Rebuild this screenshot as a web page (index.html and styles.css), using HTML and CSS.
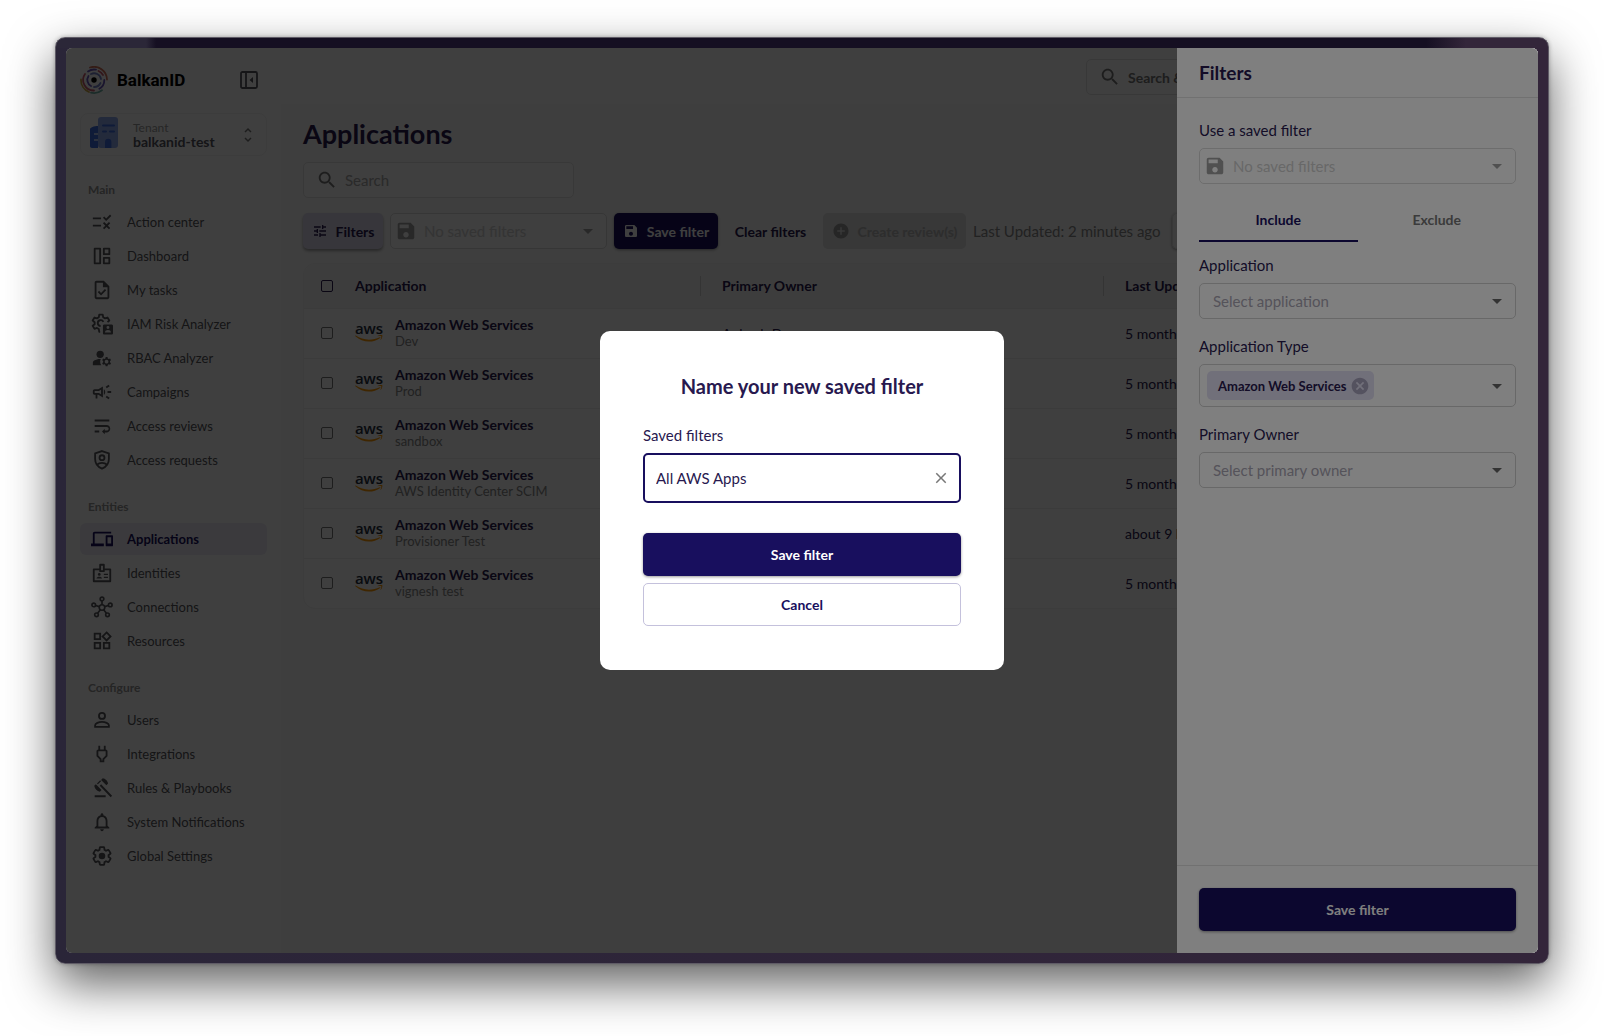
FILE: index.html
```html
<!DOCTYPE html>
<html lang="en">
<head>
    <meta charset="UTF-8">
    <meta name="viewport" content="width=device-width, initial-scale=1.0">
    <title>Applications - BalkanID</title>
    <link rel="stylesheet" href="styles.css">
</head>
<body>
    <!-- icon sprite -->
    <svg class="sprite" aria-hidden="true">
        <symbol id="i-rule" viewBox="0 0 24 24"><path d="M16.54 11L13 7.46l1.41-1.41 2.12 2.12 4.24-4.24 1.41 1.41L16.54 11zM11 7H2v2h9V7zm10 6.41L19.59 12 17 14.59 14.41 12 13 13.41 15.59 16 13 18.59 14.41 20 17 17.41 19.59 20 21 18.59 18.41 16 21 13.41zM11 15H2v2h9v-2z"/></symbol>
        <symbol id="i-dashboard" viewBox="0 0 24 24"><g fill="none" stroke="currentColor" stroke-width="2" stroke-linejoin="round"><path d="M4 4h6v16H4zM14 4h6v6h-6zM14 14h6v6h-6z"/></g></symbol>
        <symbol id="i-task" viewBox="0 0 24 24"><path d="M14 2H6c-1.1 0-2 .9-2 2v16c0 1.1.89 2 1.99 2H18c1.1 0 2-.9 2-2V8l-6-6zm4 18H6V4h7v5h5v11zm-9.18-7.05L7.4 14.36 10.94 18l5.66-5.66-1.41-1.41-4.24 4.24-2.13-2.22z"/></symbol>
        <symbol id="i-iam" viewBox="0 0 24 24"><g fill="none" stroke="currentColor" stroke-width="2" stroke-linejoin="round"><path d="M10 20.500H9l-.5-3-2-1.200-2.700 1-2-3.300L4 12.200V10L1.800 8.200l2-3.300 2.700 1 2-1.200.5-3h3.800l.5 3 2 1.200 2.700-1 2 3.300-2 1.800"/><path d="M10.500 14.200a3.200 3.200 0 1 1 3-4.500"/></g><path fill-rule="evenodd" d="M14.500 12.500h8c.8 0 1.500.7 1.500 1.500v8c0 .8-.7 1.500-1.500 1.500h-8c-.8 0-1.500-.7-1.500-1.500v-8c0-.8.700-1.500 1.500-1.500zm4 1.800a1.600 1.600 0 1 0 0 3.200 1.600 1.600 0 0 0 0-3.200zm-3.300 7h6.600c0-2-1.500-2.800-3.300-2.800s-3.300.8-3.300 2.800z"/></symbol>
        <symbol id="i-rbac" viewBox="0 0 24 24"><circle cx="10" cy="8" r="4"/><path d="M10.670 13.020C10.450 13.010 10.230 13 10 13c-2.420 0-4.680.67-6.610 1.820C2.510 15.340 2 16.320 2 17.350V20h9.260A6.960 6.960 0 0 1 10 16c0-1.070.25-2.070.67-2.980zM20.750 16c0-.22-.03-.42-.06-.63l1.140-1.010-1-1.730-1.450.49c-.32-.27-.68-.48-1.080-.63L18 11h-2l-.3 1.490c-.4.15-.76.36-1.080.63l-1.450-.49-1 1.730 1.140 1.010c-.03.21-.06.41-.06.63s.03.42.06.63l-1.140 1.010 1 1.730 1.450-.49c.32.27.68.48 1.080.63L16 21h2l.3-1.490c.4-.15.76-.36 1.080-.63l1.450.49 1-1.730-1.140-1.010c.03-.21.06-.41.06-.63zM17 18c-1.100 0-2-.9-2-2s.9-2 2-2 2 .9 2 2-.9 2-2 2z"/></symbol>
        <symbol id="i-campaign" viewBox="0 0 24 24"><path d="M18 11v2h4v-2h-4zM16 17.610c.96.71 2.210 1.650 3.200 2.390.4-.53.8-1.070 1.200-1.600-.99-.74-2.240-1.680-3.200-2.400-.4.54-.8 1.080-1.200 1.610zM20.400 5.600c-.4-.53-.8-1.070-1.200-1.600-.99.74-2.240 1.680-3.200 2.400.4.53.8 1.070 1.200 1.600.96-.72 2.210-1.650 3.200-2.400zM4 9c-1.100 0-2 .9-2 2v2c0 1.100.9 2 2 2h1v4h2v-4h1l5 3V6L8 9H4zm5.030 1.710L11 9.530v4.940l-1.970-1.180-.48-.29H4v-2h4.550l.48-.29zM15.500 12c0-1.330-.58-2.530-1.500-3.350v6.690c.92-.81 1.500-2.010 1.500-3.340z"/></symbol>
        <symbol id="i-wrap" viewBox="0 0 24 24"><path d="M4 19h5v-2H4v2zM20 5H4v2h16V5zm-3 6H4v2h13.250c1.100 0 2 .9 2 2s-.9 2-2 2H15v-2l-3 3 3 3v-2h2c2.210 0 4-1.790 4-4s-1.790-4-4-4z"/></symbol>
        <symbol id="i-shield" viewBox="0 0 24 24"><g fill="none" stroke="currentColor" stroke-width="2"><path d="M12 2.200l7.500 2.600V11c0 5-3.200 8.800-7.500 10.500C7.700 19.800 4.500 16 4.500 11V4.800z"/><circle cx="12" cy="9.500" r="2.700"/><path d="M6.500 17c3-2.600 8-2.600 11 0"/></g></symbol>
        <symbol id="i-devices" viewBox="0 0 24 24"><path d="M4 6h18V4H4c-1.100 0-2 .9-2 2v11H0v3h14v-3H4V6zm19 2h-6c-.55 0-1 .45-1 1v10c0 .55.45 1 1 1h6c.55 0 1-.45 1-1V9c0-.55-.45-1-1-1zm-1 9h-4v-7h4v7z"/></symbol>
        <symbol id="i-badge" viewBox="0 0 24 24"><g fill="none" stroke="currentColor" stroke-width="2" stroke-linejoin="round"><path d="M10 8H3v13h18V8h-7"/><path d="M10 3h4v7h-4z"/></g><circle cx="9" cy="13.500" r="1.500"/><path d="M6 18c0-1.500 1.500-2 3-2s3 .5 3 2zM14 12.800h4.500v1.500H14zM14 16h4.500v1.500H14z"/></symbol>
        <symbol id="i-hub" viewBox="0 0 24 24"><g fill="none" stroke="currentColor" stroke-width="1.800"><circle cx="12" cy="12.500" r="3"/><circle cx="12" cy="3.200" r="2"/><circle cx="3" cy="9.700" r="2"/><circle cx="21" cy="9.700" r="2"/><circle cx="6" cy="20.500" r="2"/><circle cx="18" cy="20.500" r="2"/><path d="M12 5.200v4.300M5 10.300l4.100 1.300M19 10.300l-4.100 1.300M7.200 18.900l3-4M16.800 18.900l-3-4"/></g></symbol>
        <symbol id="i-widgets" viewBox="0 0 24 24"><g fill="none" stroke="currentColor" stroke-width="2"><path d="M4 4h6v6H4zM4 14h6v6H4zM14 14h6v6h-6zM17 2.700l4.300 4.300-4.300 4.300L12.700 7z"/></g></symbol>
        <symbol id="i-user" viewBox="0 0 24 24"><g fill="none" stroke="currentColor" stroke-width="2"><circle cx="12" cy="7.500" r="3.300"/><path d="M4.500 19.500v-1.800c0-2 4-3.700 7.500-3.700s7.500 1.700 7.500 3.700v1.800z"/></g></symbol>
        <symbol id="i-plug" viewBox="0 0 24 24"><path d="M16 9v4.660l-3.500 3.510V19h-1v-1.830L8 13.650V9h8m0-6h-2v4h-4V3H8v4h-.01C6.900 6.990 6 7.890 6 8.980v5.520L9.500 18v3h5v-3l3.500-3.510V9c0-1.100-.9-2-2-2V3z"/></symbol>
        <symbol id="i-gavel" viewBox="0 0 24 24"><path d="M4 20h12v2H4zM9.500 9.500L11 8l12 12.500-1.500 1.500zM11 3.200l1.800-1.800c2.800.3 5.500 3 5.800 5.800l-1.800 1.800zM3.500 9.500l1.800-1.500 6.200 6.200-1.800 1.800c-3-.4-5.600-3-6.200-6.500zM6.500 7l3.500-3.500 1 1L7.500 8z"/></symbol>
        <symbol id="i-bell" viewBox="0 0 24 24"><path d="M12 22c1.100 0 2-.9 2-2h-4c0 1.100.9 2 2 2zm6-6v-5c0-3.070-1.630-5.640-4.500-6.320V4c0-.83-.67-1.500-1.500-1.500s-1.500.67-1.500 1.500v.68C7.640 5.360 6 7.920 6 11v5l-2 2v1h16v-1l-2-2zm-2 1H8v-6c0-2.480 1.510-4.500 4-4.500s4 2.020 4 4.500v6z"/></symbol>
        <symbol id="i-gear" viewBox="0 0 24 24"><path fill="none" stroke="currentColor" stroke-width="2" d="M19.140 12.940c.04-.3.06-.61.06-.94 0-.32-.02-.64-.07-.94l2.030-1.580c.18-.14.23-.41.12-.61l-1.920-3.320c-.12-.22-.37-.29-.59-.22l-2.390.96c-.5-.38-1.030-.7-1.620-.94l-.36-2.540c-.04-.24-.24-.41-.48-.41h-3.840c-.24 0-.43.17-.47.41l-.36 2.540c-.59.24-1.130.57-1.620.94l-2.390-.96c-.22-.08-.47 0-.59.22L2.740 8.870c-.12.21-.08.47.12.61l2.030 1.580c-.05.3-.09.63-.09.94s.02.64.07.94l-2.030 1.580c-.18.14-.23.41-.12.61l1.920 3.320c.12.22.37.29.59.22l2.390-.96c.5.38 1.030.7 1.620.94l.36 2.540c.05.24.24.41.48.41h3.840c.24 0 .44-.17.47-.41l.36-2.540c.59-.24 1.130-.56 1.620-.94l2.390.96c.22.08.47 0 .59-.22l1.920-3.320c.12-.22.07-.47-.12-.61l-2.010-1.580z"/><circle cx="12" cy="12" r="3.600"/></symbol>
        <symbol id="i-search" viewBox="0 0 24 24"><path d="M15.500 14h-.79l-.28-.27C15.410 12.590 16 11.110 16 9.500 16 5.910 13.090 3 9.500 3S3 5.910 3 9.500 5.910 16 9.500 16c1.610 0 3.090-.59 4.230-1.570l.27.28v.79l5 4.990L20.490 19l-4.990-5zm-6 0C7.010 14 5 11.990 5 9.500S7.010 5 9.500 5 14 7.010 14 9.500 11.990 14 9.500 14z"/></symbol>
        <symbol id="i-save" viewBox="0 0 24 24"><path d="M17 3H5c-1.110 0-2 .9-2 2v14c0 1.100.89 2 2 2h14c1.100 0 2-.9 2-2V7l-4-4zm-5 16c-1.660 0-3-1.340-3-3s1.340-3 3-3 3 1.340 3 3-1.340 3-3 3zm3-10H5V5h10v4z"/></symbol>
        <symbol id="i-tune" viewBox="0 0 24 24"><path d="M3 17v2h6v-2H3zM3 5v2h10V5H3zm10 16v-2h8v-2h-8v-2h-2v6h2zM7 9v2H3v2h4v2h2V9H7zm14 4v-2H11v2h10zm-6-4h2V7h4V5h-4V3h-2v6z"/></symbol>
        <symbol id="i-add" viewBox="0 0 24 24"><path d="M12 2C6.480 2 2 6.480 2 12s4.480 10 10 10 10-4.480 10-10S17.520 2 12 2zm5 11h-4v4h-2v-4H7v-2h4V7h2v4h4v2z"/></symbol>
        <symbol id="i-remove" viewBox="0 0 24 24"><path d="M12 2C6.470 2 2 6.470 2 12s4.470 10 10 10 10-4.470 10-10S17.530 2 12 2zm5 13.590L15.590 17 12 13.410 8.410 17 7 15.590 10.590 12 7 8.410 8.410 7 12 10.590 15.590 7 17 8.410 13.410 12 17 15.590z"/></symbol>
        <symbol id="i-close" viewBox="0 0 24 24"><path d="M19 6.410L17.590 5 12 10.590 6.410 5 5 6.410 10.590 12 5 17.590 6.410 19 12 13.410 17.590 19 19 17.590 13.410 12z"/></symbol>
        <symbol id="i-drop" viewBox="0 0 24 24"><path d="M7 10l5 5 5-5z"/></symbol>
        <symbol id="i-aws" viewBox="0 0 28 20"><text class="aws-word" x="14" y="11" text-anchor="middle">aws</text><path fill="#ff9900" d="M.8 12.600c7 5 16.500 5.300 24 1.600.5-.2.900.3.400.7-7.200 5.300-18 4.800-24.800-1.700-.4-.4 0-.9.4-.6z"/><path fill="#ff9900" d="M26.200 13.200c-.6-.5-2.300-.3-3.400 0-.3 0-.3-.3 0-.5 1.600-1 4.200-.9 4.500-.4.300.6-.2 3.300-1.500 4.500-.3.200-.5 0-.3-.3.400-1 1.100-2.700.7-3.300z"/></symbol>
    </svg>

    <div class="window">
        <div class="app">
            <aside class="sidebar">
                <div class="brand">
                    <svg class="brand-logo" viewBox="0 0 28 28" fill="none" stroke-width="1.800" stroke-linecap="round">
                        <path stroke="#d0705a" d="M10 1.500A13 13 0 0 1 27 13.500"/>
                        <path stroke="#c9a545" d="M1 13.500a13 13 0 0 0 8 12.500"/>
                        <path stroke="#6fb0a4" d="M11 26.700a13 13 0 0 0 11-2.400"/>
                        <path stroke="#c8586e" d="M5 8a10.500 10.500 0 0 0 9 16.500M18.500 5a10.500 10.500 0 0 1 4.500 4"/>
                        <path stroke="#6a54b8" d="M8 5.500a10.500 10.500 0 0 1 8-1.800M24.300 14a10 10 0 0 1-5 8.800M8.500 10a7 7 0 0 0 2.500 10"/>
                        <path stroke="#7482c8" d="M11 8a7 7 0 0 1 10 5M20.500 17a7 7 0 0 1-6.500 4"/>
                        <circle cx="14" cy="14" r="2.700" fill="#000"/>
                    </svg>
                    <span class="brand-name">BalkanID</span>
                    <button class="icon-button" type="button" aria-label="Collapse sidebar">
                        <svg viewBox="0 0 18 18" width="18" height="18" fill="none" stroke="currentColor" stroke-width="1.800"><rect x="1" y="1" width="16" height="16" rx="1.500"/><path d="M6 1v16"/><path d="M13 6v6L9.500 9z" fill="currentColor" stroke="none"/></svg>
                    </button>
                </div>

                <button class="tenant" type="button">
                    <svg class="tenant-icon" viewBox="0 0 30 32"><path fill="#3d6ee0" d="M1 13c0-1.500 4-3 8-3v22H3c-1.200 0-2-.8-2-2z"/><rect x="9" y="1" width="20" height="31" rx="3" fill="#8fa9ee"/><path stroke="#3d6ee0" stroke-width="2" stroke-linecap="round" d="M14 9.500h11M14 15.500h3M21 15.500h4"/><path fill="#3d6ee0" d="M16 32v-6a3.200 3.200 0 0 1 6.400 0v6z"/><path stroke="#d9e2fb" stroke-width="1.600" d="M5 18h4M5 24h4"/></svg>
                    <span class="tenant-text">
                        <span class="tenant-label">Tenant</span>
                        <span class="tenant-name">balkanid-test</span>
                    </span>
                    <svg class="tenant-arrows" viewBox="0 0 10 16" fill="none" stroke="currentColor" stroke-width="1.500"><path d="M2 5l3-3 3 3M2 11l3 3 3-3"/></svg>
                </button>

                <nav>
                    <h2 class="nav-title">Main</h2>
                    <ul class="nav-list">
                        <li><a class="nav-link" href="#"><svg><use href="#i-rule"/></svg>Action center</a></li>
                        <li><a class="nav-link" href="#"><svg><use href="#i-dashboard"/></svg>Dashboard</a></li>
                        <li><a class="nav-link" href="#"><svg><use href="#i-task"/></svg>My tasks</a></li>
                        <li><a class="nav-link" href="#"><svg><use href="#i-iam"/></svg>IAM Risk Analyzer</a></li>
                        <li><a class="nav-link" href="#"><svg><use href="#i-rbac"/></svg>RBAC Analyzer</a></li>
                        <li><a class="nav-link" href="#"><svg><use href="#i-campaign"/></svg>Campaigns</a></li>
                        <li><a class="nav-link" href="#"><svg><use href="#i-wrap"/></svg>Access reviews</a></li>
                        <li><a class="nav-link" href="#"><svg><use href="#i-shield"/></svg>Access requests</a></li>
                    </ul>
                    <h2 class="nav-title">Entities</h2>
                    <ul class="nav-list">
                        <li><a class="nav-link active" href="#"><svg><use href="#i-devices"/></svg>Applications</a></li>
                        <li><a class="nav-link" href="#"><svg><use href="#i-badge"/></svg>Identities</a></li>
                        <li><a class="nav-link" href="#"><svg><use href="#i-hub"/></svg>Connections</a></li>
                        <li><a class="nav-link" href="#"><svg><use href="#i-widgets"/></svg>Resources</a></li>
                    </ul>
                    <h2 class="nav-title">Configure</h2>
                    <ul class="nav-list">
                        <li><a class="nav-link" href="#"><svg><use href="#i-user"/></svg>Users</a></li>
                        <li><a class="nav-link" href="#"><svg><use href="#i-plug"/></svg>Integrations</a></li>
                        <li><a class="nav-link" href="#"><svg><use href="#i-gavel"/></svg>Rules &amp; Playbooks</a></li>
                        <li><a class="nav-link" href="#"><svg><use href="#i-bell"/></svg>System Notifications</a></li>
                        <li><a class="nav-link" href="#"><svg><use href="#i-gear"/></svg>Global Settings</a></li>
                    </ul>
                </nav>
            </aside>

            <main class="main">
                <header class="topbar">
                    <button class="global-search" type="button"><svg class="icon-lg"><use href="#i-search"/></svg>Search &amp; Ask</button>
                </header>
                <div class="content">
                    <h1>Applications</h1>
                    <label class="search-box">
                        <svg class="icon-lg"><use href="#i-search"/></svg>
                        <input type="search" placeholder="Search" aria-label="Search applications">
                    </label>

                    <div class="toolbar">
                        <button class="btn btn-soft" type="button"><svg class="icon-sm"><use href="#i-tune"/></svg>Filters</button>
                        <div class="select-box saved-select">
                            <svg class="icon-lg"><use href="#i-save"/></svg>
                            <select disabled aria-label="Saved filters">
                                <option>No saved filters</option>
                            </select>
                            <svg class="caret"><use href="#i-drop"/></svg>
                        </div>
                        <button class="btn btn-primary" type="button"><svg class="icon-sm"><use href="#i-save"/></svg>Save filter</button>
                        <button class="btn btn-text" type="button">Clear filters</button>
                        <button class="btn btn-disabled" type="button" disabled><svg class="icon-md"><use href="#i-add"/></svg>Create review(s)</button>
                        <span class="updated">Last Updated: 2 minutes ago</span>
                        <button class="btn btn-plain" type="button">Refresh</button>
                    </div>

                    <div class="table-card">
                        <table>
                            <thead>
                                <tr>
                                    <th class="col-check"><input type="checkbox" aria-label="Select all"></th>
                                    <th class="col-app">Application</th>
                                    <th class="col-owner">Primary Owner</th>
                                    <th>Last Updated</th>
                                </tr>
                            </thead>
                            <tbody>
                                <tr>
                                    <td><input type="checkbox" aria-label="Select Dev"></td>
                                    <td><div class="app-cell"><svg><use href="#i-aws"/></svg><div><strong>Amazon Web Services</strong><span>Dev</span></div></div></td>
                                    <td>Ankush Deep</td>
                                    <td>5 months ago</td>
                                </tr>
                                <tr>
                                    <td><input type="checkbox" aria-label="Select Prod"></td>
                                    <td><div class="app-cell"><svg><use href="#i-aws"/></svg><div><strong>Amazon Web Services</strong><span>Prod</span></div></div></td>
                                    <td></td>
                                    <td>5 months ago</td>
                                </tr>
                                <tr>
                                    <td><input type="checkbox" aria-label="Select sandbox"></td>
                                    <td><div class="app-cell"><svg><use href="#i-aws"/></svg><div><strong>Amazon Web Services</strong><span>sandbox</span></div></div></td>
                                    <td></td>
                                    <td>5 months ago</td>
                                </tr>
                                <tr>
                                    <td><input type="checkbox" aria-label="Select AWS Identity Center SCIM"></td>
                                    <td><div class="app-cell"><svg><use href="#i-aws"/></svg><div><strong>Amazon Web Services</strong><span>AWS Identity Center SCIM</span></div></div></td>
                                    <td></td>
                                    <td>5 months ago</td>
                                </tr>
                                <tr>
                                    <td><input type="checkbox" aria-label="Select Provisioner Test"></td>
                                    <td><div class="app-cell"><svg><use href="#i-aws"/></svg><div><strong>Amazon Web Services</strong><span>Provisioner Test</span></div></div></td>
                                    <td></td>
                                    <td>about 9 hours ago</td>
                                </tr>
                                <tr>
                                    <td><input type="checkbox" aria-label="Select vignesh test"></td>
                                    <td><div class="app-cell"><svg><use href="#i-aws"/></svg><div><strong>Amazon Web Services</strong><span>vignesh test</span></div></div></td>
                                    <td></td>
                                    <td>5 months ago</td>
                                </tr>
                            </tbody>
                        </table>
                    </div>
                </div>
            </main>

            <div class="backdrop"></div>

            <section class="drawer" aria-label="Filters">
                <h2 class="drawer-title">Filters</h2>
                <div class="drawer-body">
                    <label class="field-label" for="use-saved">Use a saved filter</label>
                    <div class="select-box">
                        <svg class="icon-lg"><use href="#i-save"/></svg>
                        <select id="use-saved" disabled>
                            <option>No saved filters</option>
                        </select>
                        <svg class="caret"><use href="#i-drop"/></svg>
                    </div>
                    <div class="tabs" role="tablist">
                        <button class="tab selected" type="button" role="tab" aria-selected="true">Include</button>
                        <button class="tab" type="button" role="tab" aria-selected="false">Exclude</button>
                    </div>
                    <label class="field-label" for="f-app">Application</label>
                    <div class="combo">
                        <input id="f-app" type="text" placeholder="Select application">
                        <svg class="caret"><use href="#i-drop"/></svg>
                    </div>
                    <label class="field-label" for="f-type">Application Type</label>
                    <div class="combo combo-chips">
                        <span class="chip">Amazon Web Services <button type="button" aria-label="Remove Amazon Web Services"><svg><use href="#i-remove"/></svg></button></span>
                        <input id="f-type" type="text">
                        <svg class="caret"><use href="#i-drop"/></svg>
                    </div>
                    <label class="field-label" for="f-owner">Primary Owner</label>
                    <div class="combo">
                        <input id="f-owner" type="text" placeholder="Select primary owner">
                        <svg class="caret"><use href="#i-drop"/></svg>
                    </div>
                </div>
                <div class="drawer-footer">
                    <button class="btn btn-primary btn-block" type="button">Save filter</button>
                </div>
            </section>

            <div class="backdrop modal-backdrop">
                <form class="modal" role="dialog" aria-labelledby="modal-title">
                    <h2 id="modal-title">Name your new saved filter</h2>
                    <label class="field-label" for="filter-name">Saved filters</label>
                    <div class="name-box">
                        <input id="filter-name" type="text" value="All AWS Apps">
                        <button type="button" aria-label="Clear"><svg><use href="#i-close"/></svg></button>
                    </div>
                    <button class="btn btn-primary btn-block" type="button">Save filter</button>
                    <button class="btn btn-outline btn-block" type="button">Cancel</button>
                </form>
            </div>
        </div>
    </div>
</body>
</html>
```

FILE: styles.css
```css
* {
    box-sizing: border-box;
}
body {
    margin: 0;
    padding: 37px 55px 72px;
    height: 100vh;
    background-color: #fff;
    font-family: Lato, sans-serif;
    font-size: 14px;
    color: #28194f;
}
h1, h2, ul {
    margin: 0;
    padding: 0;
}
button, input, select {
    font: inherit;
    color: inherit;
}
button {
    padding: 0;
    border: none;
    background: none;
}
input, select {
    min-width: 0;
    padding: 0;
    border: none;
    outline: none;
    background: none;
}
svg {
    flex-shrink: 0;
    fill: currentColor;
}
.sprite {
    display: none;
}
.icon-lg {
    width: 22px;
    height: 22px;
}
.icon-md {
    width: 18px;
    height: 18px;
}
.icon-sm {
    width: 16px;
    height: 16px;
}
.caret {
    width: 24px;
    height: 24px;
}

/* window frame */
.window {
    height: 100%;
    padding: 10px;
    border: 1px solid #5f5b66;
    border-radius: 10px;
    background: linear-gradient(90deg, #2b2738 0, #2b2738 90px, #150f22 100px, #150f22 1370px, #33263a 1410px) top / 100% 10px no-repeat, linear-gradient(90deg, #2a2538, #33253a);
    box-shadow: 0 20px 48px rgba(0, 0, 0, 0.62), 0 0 4px rgba(0, 0, 0, 0.3);
}
.app {
    position: relative;
    display: flex;
    height: 100%;
    overflow: hidden;
    border-radius: 6px;
    background-color: #fff;
}

/* sidebar */
.sidebar {
    flex: 0 0 215px;
    padding: 18px 14px;
}
.brand {
    display: flex;
    align-items: center;
    height: 28px;
    padding-right: 9px;
}
.brand-logo {
    width: 28px;
    height: 28px;
    margin-right: 9px;
    fill: none;
}
.brand-name {
    flex: 1;
    font-family: Roboto, sans-serif;
    font-size: 17px;
    font-weight: bold;
    color: #000;
}
.icon-button {
    display: flex;
    color: #55555f;
}
.icon-button svg {
    fill: none;
}
.tenant {
    display: flex;
    align-items: center;
    width: 100%;
    height: 43px;
    margin-top: 19px;
    padding: 0 13px 0 8px;
    border: 1px solid #f0f0f0;
    border-radius: 8px;
    text-align: left;
}
.tenant-icon {
    width: 30px;
    height: 32px;
    margin: 0 14px 6px 0;
}
.tenant-text {
    flex: 1;
}
.tenant-label, .tenant-name {
    display: block;
    line-height: 14px;
}
.tenant-label {
    font-size: 12px;
    color: #999;
}
.tenant-name {
    font-weight: bold;
    color: #55555f;
}
.tenant-arrows {
    width: 10px;
    height: 16px;
    fill: none;
    color: #777;
}
.nav-title {
    margin-top: 24px;
    padding-left: 8px;
    font-size: 12px;
    line-height: 20px;
    color: #949494;
}
.nav-list {
    margin: 6px 0 -3px;
    list-style: none;
}
.nav-link {
    display: flex;
    align-items: center;
    gap: 14px;
    height: 32px;
    margin-bottom: 2px;
    padding-left: 11px;
    border-radius: 6px;
    font-size: 13px;
    color: #55555a;
    text-decoration: none;
}
.nav-link svg {
    width: 22px;
    height: 22px;
}
.nav-link.active {
    background-color: #ecebf5;
    font-weight: bold;
    color: #180f5e;
}

/* main area */
.main {
    flex: 1;
    min-width: 0;
    background-color: #fafafa;
}
.topbar {
    display: flex;
    justify-content: flex-end;
    height: 56px;
    padding: 11px 22px;
    background-color: #fdfdfd;
}
.global-search {
    display: flex;
    align-items: center;
    gap: 7px;
    width: 430px;
    height: 36px;
    padding-left: 12px;
    border: 1px solid #e2e2e2;
    border-radius: 5px;
    font-weight: bold;
    color: #777;
}
.content {
    padding: 12px 22px;
}
h1 {
    font-size: 27px;
    line-height: 36px;
}
.search-box {
    display: flex;
    align-items: center;
    gap: 7px;
    width: 271px;
    height: 36px;
    margin-top: 10px;
    padding-left: 12px;
    border: 1px solid #e2e2e2;
    border-radius: 5px;
    background-color: #fcfcfc;
    font-size: 15px;
    color: #777;
}
.search-box input::placeholder {
    color: #a8a8a8;
}
.toolbar {
    display: flex;
    align-items: center;
    gap: 7px;
    margin: 15px 0 10px;
    padding-bottom: 4px;
}
.btn {
    display: flex;
    flex-shrink: 0;
    align-items: center;
    justify-content: center;
    gap: 8px;
    height: 36px;
    border-radius: 5px;
    font-weight: bold;
}
.btn-soft {
    width: 80px;
    background-color: #dcd9ec;
    box-shadow: 0 2px 3px rgba(0, 0, 0, 0.35);
}
.btn-primary {
    width: 104px;
    background-color: #180f5e;
    box-shadow: 0 1px 3px rgba(0, 0, 0, 0.4);
    color: #fff;
}
.btn-text {
    width: 91px;
}
.btn-disabled {
    width: 143px;
    background-color: #e0e0e0;
    color: #b4b4b4;
}
.btn-disabled svg {
    color: #999;
}
.btn-plain {
    width: 100px;
    border: 1px solid #e2e2e2;
    box-shadow: 0 1px 3px rgba(0, 0, 0, 0.4);
}
.btn-outline {
    border: 1px solid #c4c1dc;
    color: #180f5e;
}
.btn-block {
    width: 100%;
    height: 43px;
}
.updated {
    flex: 0 0 192px;
    font-size: 15px;
    white-space: nowrap;
    color: #888;
}
.select-box {
    display: flex;
    align-items: center;
    gap: 7px;
    height: 36px;
    padding: 0 6px 0 4px;
    border: 1px solid #dadada;
    border-radius: 5px;
    font-size: 15px;
    color: #a0a0a0;
}
.saved-select {
    flex: 0 0 217px;
    background-color: #fcfcfc;
}
.select-box select {
    flex: 1;
    appearance: none;
    color: #d0d0d0;
    opacity: 1;
}

/* table */
.table-card {
    overflow: hidden;
    border: 1px solid #f0f0f0;
    border-radius: 12px;
    background-color: #fcfcfc;
}
table {
    width: 100%;
    table-layout: fixed;
    border-collapse: collapse;
}
th, td {
    padding: 0 0 0 22px;
    text-align: left;
}
th {
    position: relative;
    height: 44px;
    background-color: #f7f7f7;
}
td {
    height: 50px;
    border-top: 1px solid #ececec;
}
th:first-child, td:first-child {
    padding-left: 17px;
}
th:nth-child(2), td:nth-child(2) {
    padding-left: 11px;
}
.col-check {
    width: 40px;
}
.col-app {
    width: 356px;
}
.col-owner {
    width: 403px;
}
/* column separators */
th:nth-child(n+3)::before {
    content: "";
    position: absolute;
    top: 12px;
    bottom: 12px;
    left: 0;
    width: 1px;
    background-color: #d0d0d0;
}
input[type="checkbox"] {
    display: block;
    width: 12px;
    height: 12px;
    margin: 0;
    appearance: none;
    border: 1px solid #777;
    border-radius: 2px;
}
th input[type="checkbox"] {
    border-color: #28194f;
}
.app-cell {
    display: flex;
    align-items: center;
    gap: 12px;
}
.app-cell svg {
    width: 28px;
    height: 20px;
}
.aws-word {
    font: 600 15px "Open Sans", sans-serif;
    fill: #252f3e;
}
.app-cell strong, .app-cell span {
    display: block;
    line-height: 16px;
}
.app-cell span {
    font-size: 13px;
    color: #888;
}

/* overlays */
.backdrop {
    position: absolute;
    inset: 0;
    background-color: rgba(0, 0, 0, 0.5);
}
.drawer {
    position: absolute;
    top: 0;
    right: 0;
    bottom: 0;
    display: flex;
    flex-direction: column;
    width: 361px;
    background-color: #fff;
}
.drawer-title {
    padding: 0 22px;
    border-bottom: 1px solid #e2e2e2;
    font-size: 19px;
    line-height: 49px;
}
.drawer-body {
    flex: 1;
    padding: 21px 22px;
}
.drawer-footer {
    padding: 22px;
    border-top: 1px solid #e2e2e2;
}
.field-label {
    display: block;
    margin-bottom: 7px;
    font-size: 15px;
    line-height: 22px;
}
.tabs {
    display: flex;
    margin: 15px 0 12px;
}
.tab {
    flex: 1;
    height: 43px;
    border-bottom: 2px solid transparent;
    font-size: 14px;
    font-weight: bold;
    color: #777;
}
.tab.selected {
    border-color: #180f5e;
    color: #180f5e;
}
.combo {
    display: flex;
    align-items: center;
    height: 36px;
    margin-bottom: 16px;
    padding: 0 6px 0 13px;
    border: 1px solid #d0d0d0;
    border-radius: 5px;
    font-size: 15px;
}
.combo input {
    flex: 1;
}
.combo input::placeholder {
    color: #aaa6b4;
}
.combo .caret {
    color: #666;
}
.combo-chips {
    height: 43px;
    padding-left: 7px;
}
.chip {
    display: flex;
    align-items: center;
    gap: 4px;
    height: 29px;
    padding: 0 4px 0 11px;
    border-radius: 5px;
    background-color: #e3e0f4;
    font-size: 13px;
    font-weight: bold;
}
.chip button {
    display: flex;
    color: #a9a4bf;
}
.chip svg {
    width: 20px;
    height: 20px;
}
.modal-backdrop {
    display: flex;
    align-items: center;
    justify-content: center;
}
.modal {
    width: 404px;
    padding: 43px 43px 44px;
    border-radius: 10px;
    background-color: #fff;
}
.modal h2 {
    margin-bottom: 26px;
    font-size: 20px;
    line-height: 24px;
    text-align: center;
}
.name-box {
    display: flex;
    align-items: center;
    height: 50px;
    margin-bottom: 30px;
    padding: 0 9px 0 11px;
    border: 2px solid #180f5e;
    border-radius: 5px;
    font-size: 15px;
}
.name-box input {
    flex: 1;
}
.name-box button {
    display: flex;
    color: #777;
}
.name-box svg {
    width: 18px;
    height: 18px;
}
.modal .btn-outline {
    margin-top: 7px;
}
```
